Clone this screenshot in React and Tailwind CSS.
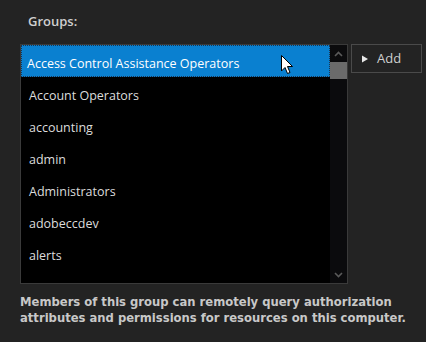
const groups = [
  'Access Control Assistance Operators',
  'Account Operators',
  'accounting',
  'admin',
  'Administrators',
  'adobeccdev',
  'alerts',
];

function Cursor() {
  return (
    <svg width="13" height="20" viewBox="0 0 13 20" className="absolute left-[281px] top-[55px]">
      <path d="M0.5 0.5 L0.5 16 L4 12.5 L6.5 18.5 L9 17.5 L6.5 11.5 L11.5 11.5 Z" fill="#fff" stroke="#000" strokeWidth="1" />
    </svg>
  );
}

export default function App() {
  const selected = 0;

  return (
    <div className="relative w-[426px] h-[342px] bg-[#232323] overflow-hidden" style={{ fontFamily: '"Open Sans", "Noto Sans", sans-serif' }}>
      <div className="pl-[28px] pt-[12px] h-[44px] text-[13px] font-semibold text-[#cfcfcf]">Groups:</div>

      <div className="flex pl-[20px]">
        <div className="flex w-[328px] h-[240px] border border-[#3a3a3a] bg-black">
          <ul className="flex-1 overflow-hidden">
            {groups.map((g, i) => (
              <li
                key={g}
                className={
                  i === selected
                    ? 'h-[32px] flex items-center pt-[6px] pl-[5px] text-[12.5px] text-white bg-[#0a80d0] border border-dotted border-[#1a3550]'
                    : 'h-[32px] flex items-center pt-[7px] pl-[8px] text-[12.5px] text-[#dcdcdc]'
                }
              >
                {g}
              </li>
            ))}
          </ul>
          <div className="w-[17px] flex flex-col bg-[#0b0b0d]">
            <div className="h-[17px] flex items-center justify-center">
              <svg width="9" height="6" viewBox="0 0 9 6"><path d="M1 5 L4.5 1.5 L8 5" fill="none" stroke="#5a5a5a" strokeWidth="1.6" /></svg>
            </div>
            <div className="h-[17px] bg-[#6b6b6b]"></div>
            <div className="flex-1"></div>
            <div className="h-[17px] flex items-center justify-center">
              <svg width="9" height="6" viewBox="0 0 9 6"><path d="M1 1 L4.5 4.5 L8 1" fill="none" stroke="#5a5a5a" strokeWidth="1.6" /></svg>
            </div>
          </div>
        </div>

        <button className="ml-[3px] w-[71px] h-[29px] border border-[#4a4a4a] flex items-center pl-[9px] gap-[8px] text-[13px] text-[#d0d0d0]">
          <svg width="8" height="8" viewBox="0 0 8 8"><path d="M1 0.5 L7 4 L1 7.5 Z" fill="#e8e8e8" /></svg>
          <span>Add</span>
        </button>
      </div>

      <p className="pl-[20px] pt-[10px] text-[11.6px] leading-[16px] font-semibold text-[#c8c8c8]" style={{ fontFamily: '"DejaVu Sans", Verdana, sans-serif' }}>
        Members of this group can remotely query authorization attributes and permissions for resources on this computer.
      </p>

      <Cursor />
    </div>
  );
}
